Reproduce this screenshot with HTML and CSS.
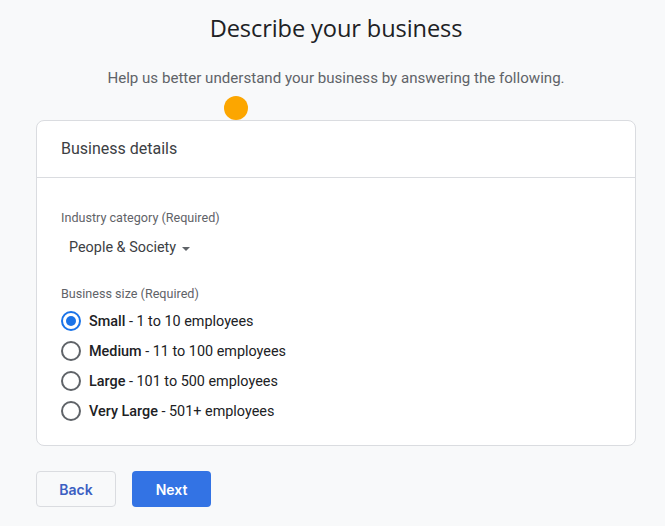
FILE: index.html
```html
<!DOCTYPE html>
<html lang="en">
<head>
<meta charset="utf-8">
<title>Describe your business</title>
<link rel="stylesheet" href="styles.css">
</head>
<body>
<main class="page">
  <h1 class="title">Describe your business</h1>
  <p class="subtitle">Help us better understand your business by answering the following.</p>
  <div class="dot-row"><span class="dot"></span></div>
  <section class="card">
    <header class="card-head">Business details</header>
    <div class="card-body">
      <div class="field-label">Industry category (Required)</div>
      <div class="select">People &amp; Society <span class="caret"></span></div>
      <div class="field-label size-label">Business size (Required)</div>
      <ul class="radios">
        <li class="radio checked"><span class="circle"></span><span><b>Small</b> - 1 to 10 employees</span></li>
        <li class="radio"><span class="circle"></span><span><b>Medium</b> - 11 to 100 employees</span></li>
        <li class="radio"><span class="circle"></span><span><b>Large</b> - 101 to 500 employees</span></li>
        <li class="radio"><span class="circle"></span><span><b>Very Large</b> - 501+ employees</span></li>
      </ul>
    </div>
  </section>
  <div class="actions">
    <button class="btn btn-back">Back</button>
    <button class="btn btn-next">Next</button>
  </div>
</main>
</body>
</html>
```
FILE: styles.css
```css
html, body {
  margin: 0;
  padding: 0;
  background: #f8f9fa;
}
body {
  font-family: Roboto, "Liberation Sans", sans-serif;
  color: #202124;
}
.page {
  width: 600px;
  margin: 0 0 0 36px;
}
.title {
  margin: 0;
  padding-top: 13px;
  font-family: "Open Sans", sans-serif;
  font-weight: 400;
  font-size: 23.6px;
  line-height: 30px;
  text-align: center;
  color: #202124;
  letter-spacing: -0.1px;
}
.subtitle {
  margin: 25px 0 0;
  font-size: 15.1px;
  line-height: 20px;
  text-align: center;
  color: #5f6368;
}
.dot-row {
  height: 32px;
  position: relative;
}
.dot {
  position: absolute;
  left: 188px;
  top: 8px;
  width: 24px;
  height: 24px;
  border-radius: 50%;
  background: #fca600;
  z-index: 2;
}
.card {
  background: #fff;
  border: 1px solid #dadce0;
  border-radius: 8px;
  height: 326px;
  box-sizing: border-box;
}
.card-head {
  height: 57px;
  box-sizing: border-box;
  padding: 18px 24px 0;
  font-size: 16px;
  line-height: 20px;
  color: #3c4043;
  border-bottom: 1px solid #dadce0;
}
.card-body {
  padding: 32px 24px 0;
}
.field-label {
  font-size: 12.6px;
  line-height: 16px;
  color: #5f6368;
}
.select {
  margin-top: 12px;
  padding-left: 8px;
  font-size: 14.4px;
  line-height: 20px;
  color: #3c4043;
  display: flex;
  align-items: center;
}
.caret {
  display: inline-block;
  margin-left: 6px;
  margin-top: 2px;
  width: 0;
  height: 0;
  border-left: 4px solid transparent;
  border-right: 4px solid transparent;
  border-top: 4px solid #5f6368;
}
.size-label {
  margin-top: 28px;
}
.radios {
  list-style: none;
  margin: 4px 0 0;
  padding: 0;
}
.radio {
  display: flex;
  align-items: center;
  height: 30px;
  font-size: 14.4px;
  color: #202124;
}
.radio b {
  font-weight: 500;
}
.circle {
  width: 16px;
  height: 16px;
  border: 2px solid #5f6368;
  border-radius: 50%;
  margin-right: 8px;
  position: relative;
  flex: none;
}
.checked .circle {
  border-color: #1a73e8;
}
.checked .circle::after {
  content: "";
  position: absolute;
  left: 3px;
  top: 3px;
  width: 10px;
  height: 10px;
  border-radius: 50%;
  background: #1a73e8;
}
.actions {
  display: flex;
  gap: 16px;
  margin-top: 25px;
}
.btn {
  height: 36px;
  border-radius: 4px;
  font-family: Inter, "Open Sans", sans-serif;
  font-weight: 600;
  font-size: 14px;
  cursor: pointer;
}
.btn-back {
  width: 80px;
  background: #f8f9fa;
  border: 1px solid #dadce0;
  color: #3b5fc2;
}
.btn-next {
  width: 79px;
  background: #3373e4;
  border: none;
  color: #fff;
}
```
